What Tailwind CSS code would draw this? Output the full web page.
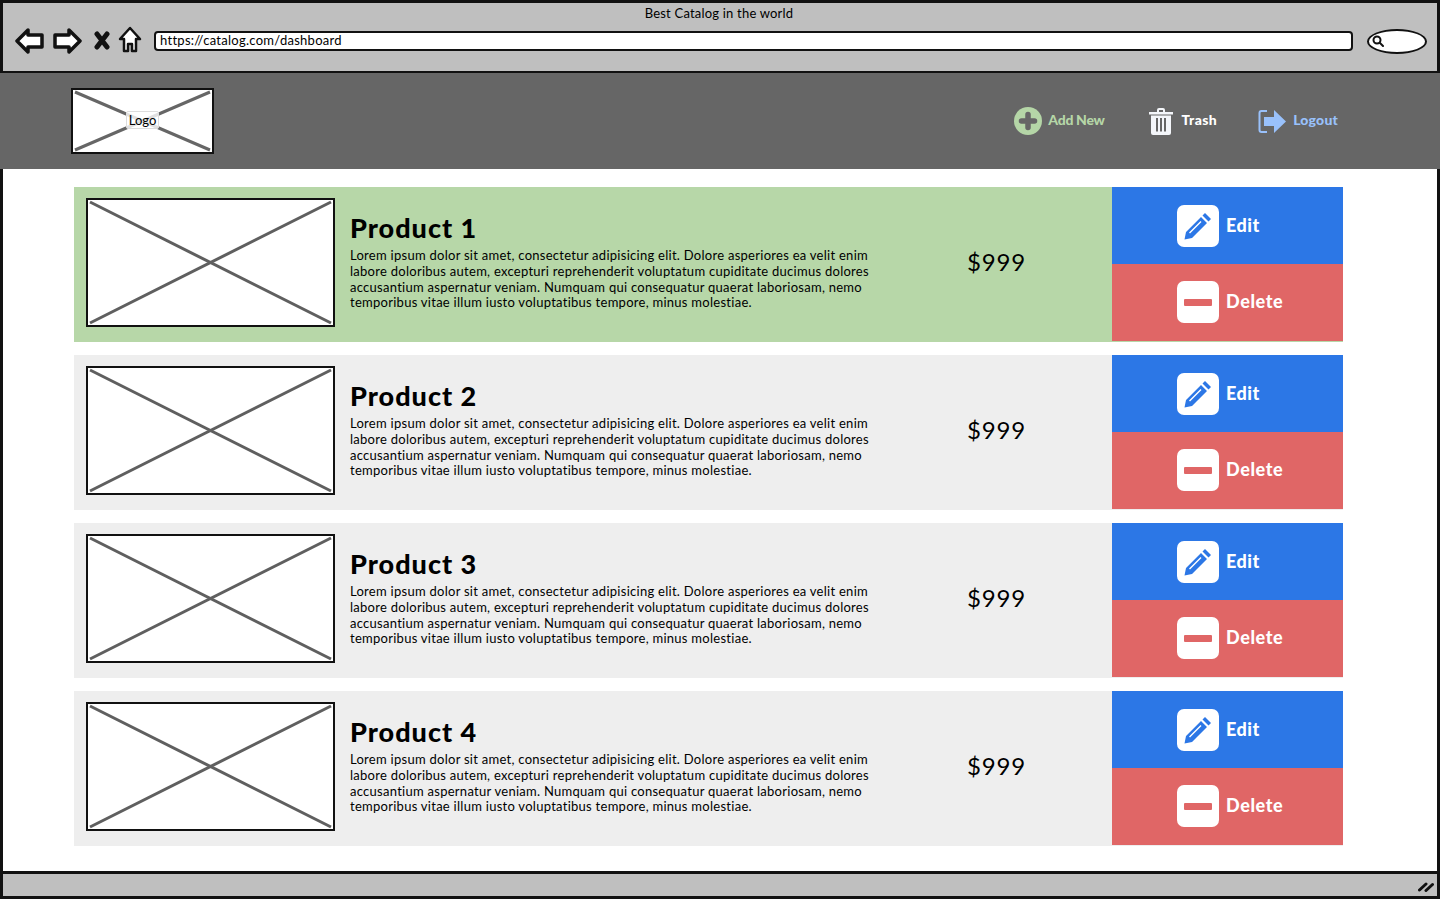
<!doctype html>
<html lang="en">
<head>
<meta charset="utf-8">
<title>Best Catalog in the world</title>
<script src="https://cdn.jsdelivr.net/npm/@tailwindcss/browser@4"></script>
</head>
<body class="bg-white font-['Lato',sans-serif] text-black">
<div class="w-[1440px] h-[900px] overflow-hidden flex flex-col">

  <!-- browser chrome -->
  <header class="h-[73px] shrink-0 bg-[#bfbfbf] border-t-[3px] border-l-[3px] border-r-[3px] border-b-2 border-[#111] relative">
    <p class="text-center text-[13px] leading-[16px] pt-[2px] pr-[2px] tracking-[0.2px]">Best Catalog in the world</p>
    <div class="flex items-center pl-[12px] mt-[1px] h-[38px]">
      <svg class="w-[30px] h-[28px]" viewBox="0 0 30 28" fill="#fff" stroke="#111" stroke-width="3.500" stroke-linejoin="round"><path d="M2 14 L13 3 V8 H27 V20 H13 V25 Z"/></svg>
      <svg class="w-[30px] h-[28px] ml-[7px]" viewBox="0 0 30 28" fill="#fff" stroke="#111" stroke-width="3.500" stroke-linejoin="round"><path d="M28 14 L17 3 V8 H3 V20 H17 V25 Z"/></svg>
      <svg class="w-[16px] h-[20px] ml-[12px]" viewBox="0 0 16 20" fill="none" stroke="#111" stroke-width="5" stroke-linecap="round"><path d="M3 3 L13 16 M13 3 L3 16"/></svg>
      <svg class="w-[24px] h-[28px] ml-[8px] -mt-[3px]" viewBox="0 0 24 28" fill="#fff" stroke="#111" stroke-width="2.500" stroke-linejoin="round"><path d="M12 2 L22 13 H18 V25 H14 V18 H10 V25 H6 V13 H2 Z"/></svg>
      <div class="ml-[12px] w-[1199px] h-[20px] bg-white border-2 border-[#111] rounded-[4px] text-[13px] leading-[15px] pl-[4px] pb-[1px] tracking-[0.28px] flex items-center">https://catalog.com/dashboard</div>
      <div class="ml-[14px] w-[60px] h-[25px] bg-white border-[2.5px] border-[#111] rounded-[50%] flex items-center pl-[3px]">
        <svg class="w-[12px] h-[12px]" viewBox="0 0 12 12" fill="none" stroke="#111" stroke-width="2"><circle cx="5" cy="5" r="3.500"/><path d="M8 8 L11 11" stroke-linecap="round"/></svg>
      </div>
    </div>
  </header>

  <!-- nav -->
  <nav class="h-[96px] shrink-0 bg-[#666666] flex items-center justify-between pl-[71px] pr-[102px]">
    <div class="w-[143px] h-[66px] bg-white border-2 border-[#111] relative -mt-[1px] flex items-center justify-center">
      <svg class="absolute inset-0 w-full h-full" viewBox="0 0 139 62" preserveAspectRatio="none" stroke="#666" stroke-width="3"><path d="M2 2 L137 60 M137 2 L2 60"/></svg>
      <span class="relative -mt-[2px] text-[13px] leading-[16px] px-[2px] bg-white/80 border border-[#ddd] rounded-[2px]">Logo</span>
    </div>
    <div class="flex items-center -mt-[2px] text-[14px] font-black">
      <a href="#" class="flex items-center text-[#b5d6a7]">
        <svg class="w-[28px] h-[28px] mt-[2px]" viewBox="0 0 28 28"><circle cx="14" cy="14" r="14" fill="#b5d6a7"/><path d="M14 7.500 V20.500 M7.500 14 H20.500" stroke="#666" stroke-width="5.500" stroke-linecap="round"/></svg>
        <span class="ml-[6px] -mt-[2px] tracking-[-0.3px]">Add New</span>
      </a>
      <a href="#" class="flex items-center text-white ml-[44px]">
        <svg class="w-[24px] h-[28px] mt-[2px]" viewBox="0 0 24 28" fill="#f4f6fa"><path fill-rule="evenodd" d="M0 5 H8 V3 Q8 1 10 1 H14 Q16 1 16 3 V5 H24 V7.500 H0 Z M10 3 V5 H14 V3 Z"/><path fill-rule="evenodd" d="M2 8.500 H22 V26 Q22 28 20 28 H4 Q2 28 2 26 Z M7 11 V24.500 H9 V11 Z M11 11 V24.500 H13 V11 Z M15 11 V24.500 H17 V11 Z"/></svg>
        <span class="ml-[9px] -mt-[2px] tracking-[0.4px]">Trash</span>
      </a>
      <a href="#" class="flex items-center text-[#99c1fb] ml-[41px]">
        <svg class="w-[29px] h-[25px] mt-[2px]" viewBox="0 0 29 25"><path d="M9 2 H3.500 Q1.500 2 1.500 4 V21 Q1.500 23 3.500 23 H9" fill="none" stroke="#99c1fb" stroke-width="2"/><path d="M6 8 H16 V1 L28 12.500 L16 24 V17 H6 Z" fill="#99c1fb"/></svg>
        <span class="ml-[6px] -mt-[2px] tracking-[0.2px]">Logout</span>
      </a>
    </div>
  </nav>

  <!-- product list -->
  <main class="flex-1 bg-white border-l-[3px] border-r-[3px] border-[#111] pl-[71px] pr-[94px] pt-[18px] flex flex-col gap-[13px]">

    <article class="h-[155px] bg-[#b7d7a8] flex">
      <div class="w-[249px] h-[129px] ml-[12px] mt-[11px] shrink-0 bg-white border-2 border-[#111]">
        <svg class="w-full h-full" viewBox="0 0 245 125" preserveAspectRatio="none" stroke="#5f5f5f" stroke-width="3"><path d="M2 2 L243 123 M243 2 L2 123"/></svg>
      </div>
      <div class="w-[560px] ml-[15px] pt-[23px] shrink-0">
        <h2 class="text-[27px] leading-[35px] font-black tracking-[1px]">Product 1</h2>
        <p class="text-[13px] leading-[15.7px] mt-[3.3px] tracking-[0.27px]">Lorem ipsum dolor sit amet, consectetur adipisicing elit. Dolore asperiores ea velit enim<br>labore doloribus autem, excepturi reprehenderit voluptatum cupiditate ducimus dolores<br>accusantium aspernatur veniam. Numquam qui consequatur quaerat laboriosam, nemo<br>temporibus vitae illum iusto voluptatibus tempore, minus molestiae.</p>
      </div>
      <div class="w-[202px] shrink-0 pl-[57px] pb-[6px] flex items-center text-[24px] tracking-[0.8px]">$999</div>
      <div class="w-[231px] shrink-0 flex flex-col text-white font-black text-[18px]">
        <a href="#" class="h-[77px] bg-[#2c77e6] flex items-center pl-[65px]">
          <span class="w-[42px] h-[42px] bg-white rounded-[7px] flex items-center justify-center"><svg class="w-[30px] h-[30px]" viewBox="0 0 30 30" fill="#2c77e6"><path d="M22 2 L28 8 L25.500 10.500 L19.500 4.500 Z"/><path fill-rule="evenodd" d="M18 6 L24 12 L9 27 L1.500 28.500 L3 21 Z M17.500 10 L6 21.500 L7 22.500 L18.500 11 Z"/></svg></span>
          <span class="ml-[7px] tracking-[0.5px]">Edit</span>
        </a>
        <a href="#" class="h-[77px] bg-[#e06666] flex items-center pl-[65px]">
          <span class="w-[42px] h-[42px] -mt-[1px] bg-white rounded-[7px] flex items-center justify-center"><span class="w-[28px] h-[7px] bg-[#e06666] rounded-[1px]"></span></span>
          <span class="ml-[7px] -mt-[2px] tracking-[0.6px]">Delete</span>
        </a>
      </div>
    </article>

    <article class="h-[155px] bg-[#eeeeee] flex">
      <div class="w-[249px] h-[129px] ml-[12px] mt-[11px] shrink-0 bg-white border-2 border-[#111]">
        <svg class="w-full h-full" viewBox="0 0 245 125" preserveAspectRatio="none" stroke="#5f5f5f" stroke-width="3"><path d="M2 2 L243 123 M243 2 L2 123"/></svg>
      </div>
      <div class="w-[560px] ml-[15px] pt-[23px] shrink-0">
        <h2 class="text-[27px] leading-[35px] font-black tracking-[1px]">Product 2</h2>
        <p class="text-[13px] leading-[15.7px] mt-[3.3px] tracking-[0.27px]">Lorem ipsum dolor sit amet, consectetur adipisicing elit. Dolore asperiores ea velit enim<br>labore doloribus autem, excepturi reprehenderit voluptatum cupiditate ducimus dolores<br>accusantium aspernatur veniam. Numquam qui consequatur quaerat laboriosam, nemo<br>temporibus vitae illum iusto voluptatibus tempore, minus molestiae.</p>
      </div>
      <div class="w-[202px] shrink-0 pl-[57px] pb-[6px] flex items-center text-[24px] tracking-[0.8px]">$999</div>
      <div class="w-[231px] shrink-0 flex flex-col text-white font-black text-[18px]">
        <a href="#" class="h-[77px] bg-[#2c77e6] flex items-center pl-[65px]">
          <span class="w-[42px] h-[42px] bg-white rounded-[7px] flex items-center justify-center"><svg class="w-[30px] h-[30px]" viewBox="0 0 30 30" fill="#2c77e6"><path d="M22 2 L28 8 L25.500 10.500 L19.500 4.500 Z"/><path fill-rule="evenodd" d="M18 6 L24 12 L9 27 L1.500 28.500 L3 21 Z M17.500 10 L6 21.500 L7 22.500 L18.500 11 Z"/></svg></span>
          <span class="ml-[7px] tracking-[0.5px]">Edit</span>
        </a>
        <a href="#" class="h-[77px] bg-[#e06666] flex items-center pl-[65px]">
          <span class="w-[42px] h-[42px] -mt-[1px] bg-white rounded-[7px] flex items-center justify-center"><span class="w-[28px] h-[7px] bg-[#e06666] rounded-[1px]"></span></span>
          <span class="ml-[7px] -mt-[2px] tracking-[0.6px]">Delete</span>
        </a>
      </div>
    </article>

    <article class="h-[155px] bg-[#eeeeee] flex">
      <div class="w-[249px] h-[129px] ml-[12px] mt-[11px] shrink-0 bg-white border-2 border-[#111]">
        <svg class="w-full h-full" viewBox="0 0 245 125" preserveAspectRatio="none" stroke="#5f5f5f" stroke-width="3"><path d="M2 2 L243 123 M243 2 L2 123"/></svg>
      </div>
      <div class="w-[560px] ml-[15px] pt-[23px] shrink-0">
        <h2 class="text-[27px] leading-[35px] font-black tracking-[1px]">Product 3</h2>
        <p class="text-[13px] leading-[15.7px] mt-[3.3px] tracking-[0.27px]">Lorem ipsum dolor sit amet, consectetur adipisicing elit. Dolore asperiores ea velit enim<br>labore doloribus autem, excepturi reprehenderit voluptatum cupiditate ducimus dolores<br>accusantium aspernatur veniam. Numquam qui consequatur quaerat laboriosam, nemo<br>temporibus vitae illum iusto voluptatibus tempore, minus molestiae.</p>
      </div>
      <div class="w-[202px] shrink-0 pl-[57px] pb-[6px] flex items-center text-[24px] tracking-[0.8px]">$999</div>
      <div class="w-[231px] shrink-0 flex flex-col text-white font-black text-[18px]">
        <a href="#" class="h-[77px] bg-[#2c77e6] flex items-center pl-[65px]">
          <span class="w-[42px] h-[42px] bg-white rounded-[7px] flex items-center justify-center"><svg class="w-[30px] h-[30px]" viewBox="0 0 30 30" fill="#2c77e6"><path d="M22 2 L28 8 L25.500 10.500 L19.500 4.500 Z"/><path fill-rule="evenodd" d="M18 6 L24 12 L9 27 L1.500 28.500 L3 21 Z M17.500 10 L6 21.500 L7 22.500 L18.500 11 Z"/></svg></span>
          <span class="ml-[7px] tracking-[0.5px]">Edit</span>
        </a>
        <a href="#" class="h-[77px] bg-[#e06666] flex items-center pl-[65px]">
          <span class="w-[42px] h-[42px] -mt-[1px] bg-white rounded-[7px] flex items-center justify-center"><span class="w-[28px] h-[7px] bg-[#e06666] rounded-[1px]"></span></span>
          <span class="ml-[7px] -mt-[2px] tracking-[0.6px]">Delete</span>
        </a>
      </div>
    </article>

    <article class="h-[155px] bg-[#eeeeee] flex">
      <div class="w-[249px] h-[129px] ml-[12px] mt-[11px] shrink-0 bg-white border-2 border-[#111]">
        <svg class="w-full h-full" viewBox="0 0 245 125" preserveAspectRatio="none" stroke="#5f5f5f" stroke-width="3"><path d="M2 2 L243 123 M243 2 L2 123"/></svg>
      </div>
      <div class="w-[560px] ml-[15px] pt-[23px] shrink-0">
        <h2 class="text-[27px] leading-[35px] font-black tracking-[1px]">Product 4</h2>
        <p class="text-[13px] leading-[15.7px] mt-[3.3px] tracking-[0.27px]">Lorem ipsum dolor sit amet, consectetur adipisicing elit. Dolore asperiores ea velit enim<br>labore doloribus autem, excepturi reprehenderit voluptatum cupiditate ducimus dolores<br>accusantium aspernatur veniam. Numquam qui consequatur quaerat laboriosam, nemo<br>temporibus vitae illum iusto voluptatibus tempore, minus molestiae.</p>
      </div>
      <div class="w-[202px] shrink-0 pl-[57px] pb-[6px] flex items-center text-[24px] tracking-[0.8px]">$999</div>
      <div class="w-[231px] shrink-0 flex flex-col text-white font-black text-[18px]">
        <a href="#" class="h-[77px] bg-[#2c77e6] flex items-center pl-[65px]">
          <span class="w-[42px] h-[42px] bg-white rounded-[7px] flex items-center justify-center"><svg class="w-[30px] h-[30px]" viewBox="0 0 30 30" fill="#2c77e6"><path d="M22 2 L28 8 L25.500 10.500 L19.500 4.500 Z"/><path fill-rule="evenodd" d="M18 6 L24 12 L9 27 L1.500 28.500 L3 21 Z M17.500 10 L6 21.500 L7 22.500 L18.500 11 Z"/></svg></span>
          <span class="ml-[7px] tracking-[0.5px]">Edit</span>
        </a>
        <a href="#" class="h-[77px] bg-[#e06666] flex items-center pl-[65px]">
          <span class="w-[42px] h-[42px] -mt-[1px] bg-white rounded-[7px] flex items-center justify-center"><span class="w-[28px] h-[7px] bg-[#e06666] rounded-[1px]"></span></span>
          <span class="ml-[7px] -mt-[2px] tracking-[0.6px]">Delete</span>
        </a>
      </div>
    </article>
  </main>

  <!-- status bar -->
  <footer class="h-[28px] shrink-0 mb-[1px] bg-[#bfbfbf] border-t-[3px] border-l-[3px] border-r-[3px] border-b-[3px] border-[#111] flex items-center justify-end pr-[3px]">
    <svg class="w-[16px] h-[14px]" viewBox="0 0 16 14" fill="none" stroke="#111" stroke-width="3" stroke-linecap="round"><path d="M1.500 12 L8 6 M8 12.500 L14.500 6.500"/></svg>
  </footer>
</div>
</body>
</html>
